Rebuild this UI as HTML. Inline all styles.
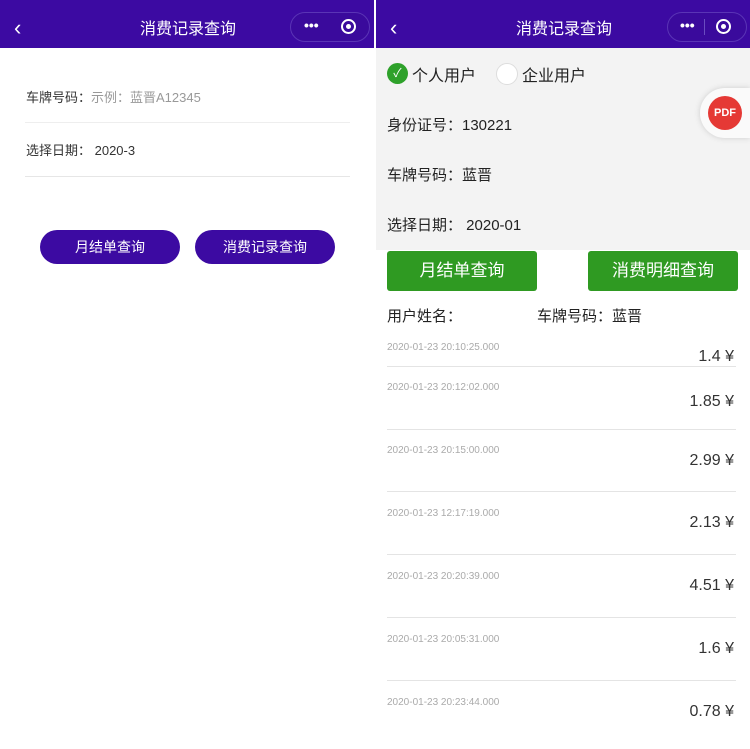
<!DOCTYPE html><html><head><meta charset="utf-8"><style>
*{margin:0;padding:0;box-sizing:border-box}
body{width:750px;height:749px;background:#fff;font-family:"Liberation Sans","Noto Sans CJK SC",sans-serif;position:relative;overflow:hidden}
.a{position:absolute;white-space:nowrap}
.hdr{position:absolute;top:0;height:48px;background:#3c0aa2;width:374px}
.ttl{color:#fff;font-size:16px;top:15px}
.cap{position:absolute;top:12px;width:80px;height:30px;border:1px solid #5a34b5;border-radius:15px;background:#3a0a9c}
.btnp{position:absolute;top:230px;height:34px;width:140px;background:#3c0aa2;border-radius:17px;color:#fff;font-size:14px;text-align:center;line-height:34px}
.btng{position:absolute;top:251px;height:40px;width:150px;background:#2f9a22;border-radius:3px;color:#fff;font-size:17px;text-align:center;line-height:40px}
.d{font-size:10px;color:#aaa}
.m{font-size:16px;color:#333;right:16px}
.ln{position:absolute;left:387px;width:349px;height:1px;background:#e4e4e4}
</style></head><body>
<div class="hdr" style="left:0"></div>
<div class="hdr" style="left:376px"></div>
<div class="a" style="left:14px;top:15px;color:#fff;font-size:22px">&lsaquo;</div>
<div class="a ttl" style="left:140px">消费记录查询</div>
<div class="cap" style="left:290px"></div>
<div class="a" style="left:304px;top:17px;color:#fff;font-size:14px;font-weight:bold">•••</div>
<div class="a" style="left:341px;top:19px;width:15px;height:15px;border:2px solid #fff;border-radius:50%"></div>
<div class="a" style="left:346px;top:24px;width:5px;height:5px;background:#fff;border-radius:50%"></div>
<div class="a" style="left:26px;top:87px;font-size:13px;color:#333">车牌号码：<span style="color:#999">示例：蓝晋A12345</span></div>
<div class="a" style="left:25px;top:122px;width:325px;height:1px;background:#eee"></div>
<div class="a" style="left:26px;top:140px;font-size:13px;color:#333">选择日期：&nbsp;2020-3</div>
<div class="a" style="left:25px;top:176px;width:325px;height:1px;background:#e6e6e6"></div>
<div class="btnp" style="left:40px">月结单查询</div>
<div class="btnp" style="left:195px">消费记录查询</div>

<div class="a" style="left:376px;top:48px;width:374px;height:202px;background:#f3f3f3"></div>
<div class="a" style="left:390px;top:15px;color:#fff;font-size:22px">&lsaquo;</div>
<div class="a ttl" style="left:516px">消费记录查询</div>
<div class="cap" style="left:667px"></div>
<div class="a" style="left:680px;top:17px;color:#fff;font-size:14px;font-weight:bold">•••</div>
<div class="a" style="left:704px;top:19px;width:1px;height:16px;background:#6a4cc0"></div>
<div class="a" style="left:716px;top:19px;width:15px;height:15px;border:2px solid #fff;border-radius:50%"></div>
<div class="a" style="left:721px;top:24px;width:5px;height:5px;background:#fff;border-radius:50%"></div>
<div class="a" style="left:387px;top:63px;width:21px;height:21px;border-radius:50%;background:#2ea12a;color:#fff;font-size:12px;text-align:center;line-height:21px">✓</div>
<div class="a" style="left:412px;top:62px;font-size:16px;color:#222">个人用户</div>
<div class="a" style="left:496px;top:63px;width:22px;height:22px;border-radius:50%;background:#fff;border:1px solid #ddd"></div>
<div class="a" style="left:522px;top:62px;font-size:16px;color:#222">企业用户</div>
<div class="a" style="left:700px;top:88px;width:50px;height:50px;border-radius:25px 0 0 25px;background:#fafafa;box-shadow:0 0 6px #ccc"></div>
<div class="a" style="left:708px;top:96px;width:34px;height:34px;border-radius:50%;background:#e53935;color:#fff;font-size:11px;font-weight:bold;text-align:center;line-height:34px">PDF</div>
<div class="a" style="left:387px;top:114px;font-size:15px;color:#222">身份证号：130221</div>
<div class="a" style="left:387px;top:164px;font-size:15px;color:#222">车牌号码：蓝晋</div>
<div class="a" style="left:387px;top:214px;font-size:15px;color:#222">选择日期：&nbsp;2020-01</div>
<div class="btng" style="left:387px">月结单查询</div>
<div class="btng" style="left:588px">消费明细查询</div>
<div class="a" style="left:387px;top:305px;font-size:15px;color:#222">用户姓名：</div>
<div class="a" style="left:537px;top:305px;font-size:15px;color:#222">车牌号码：蓝晋</div>

<div class="a d" style="left:387px;top:342px">2020-01-23 20:10:25.000</div><div class="a m" style="top:348px">1.4 ¥</div><div class="ln" style="top:366px"></div>
<div class="a d" style="left:387px;top:382px">2020-01-23 20:12:02.000</div><div class="a m" style="top:393px">1.85 ¥</div><div class="ln" style="top:429px"></div>
<div class="a d" style="left:387px;top:445px">2020-01-23 20:15:00.000</div><div class="a m" style="top:452px">2.99 ¥</div><div class="ln" style="top:491px"></div>
<div class="a d" style="left:387px;top:508px">2020-01-23 12:17:19.000</div><div class="a m" style="top:514px">2.13 ¥</div><div class="ln" style="top:554px"></div>
<div class="a d" style="left:387px;top:571px">2020-01-23 20:20:39.000</div><div class="a m" style="top:577px">4.51 ¥</div><div class="ln" style="top:617px"></div>
<div class="a d" style="left:387px;top:634px">2020-01-23 20:05:31.000</div><div class="a m" style="top:640px">1.6 ¥</div><div class="ln" style="top:680px"></div>
<div class="a d" style="left:387px;top:697px">2020-01-23 20:23:44.000</div><div class="a m" style="top:703px">0.78 ¥</div>
</body></html>
